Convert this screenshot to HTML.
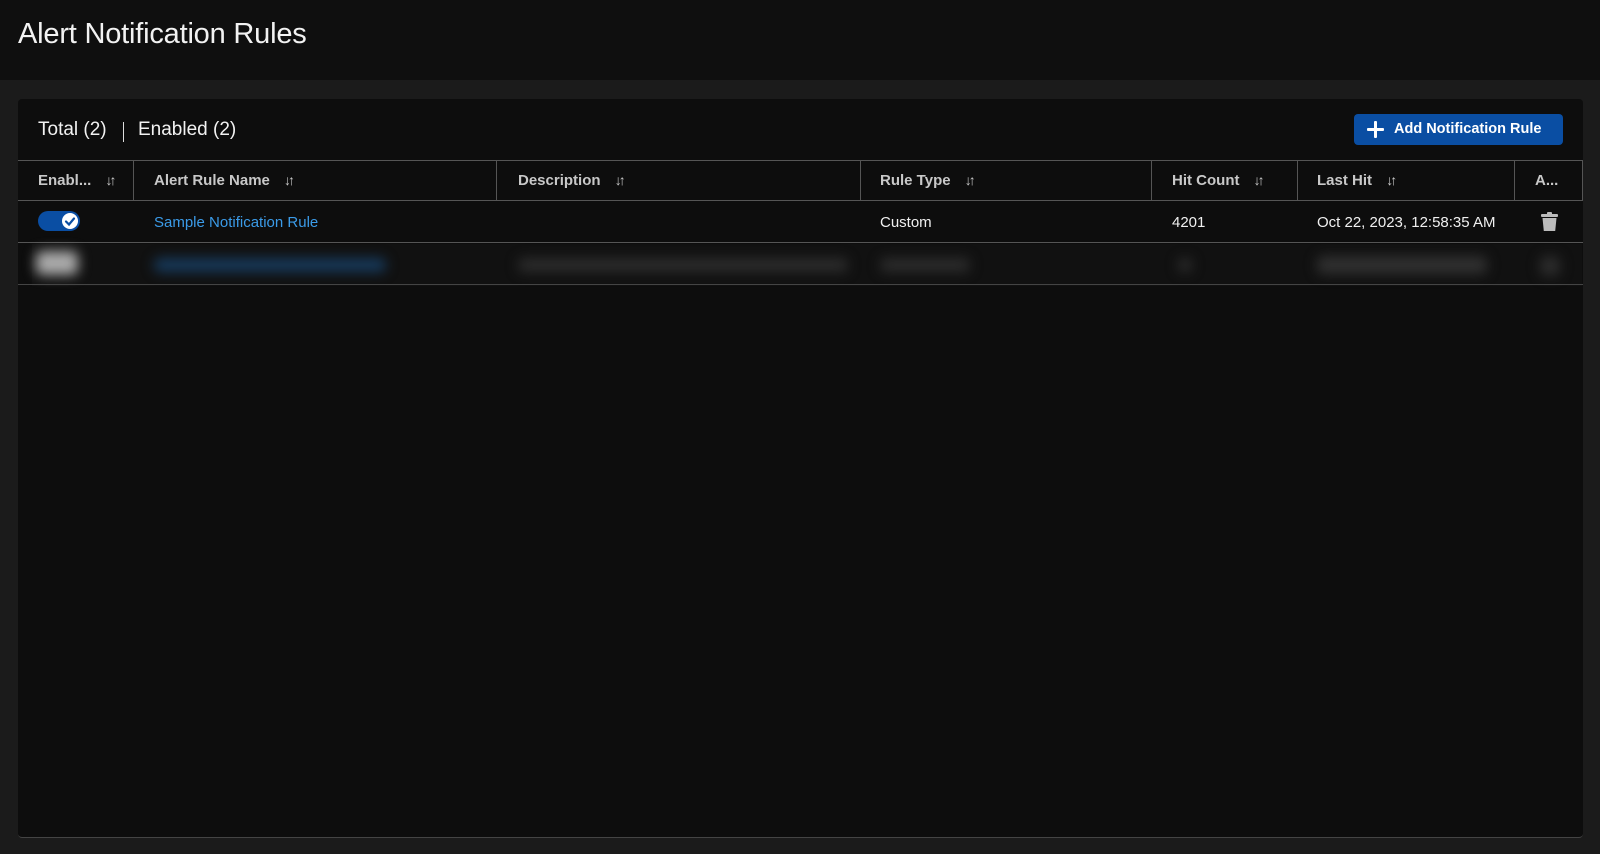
<!DOCTYPE html>
<html><head><meta charset="utf-8"><style>
*{box-sizing:border-box;margin:0;padding:0}
body{width:1600px;height:854px;background:#1b1b1b;font-family:"Liberation Sans",sans-serif;color:#e8e8e8;position:relative;overflow:hidden}
.hdr{position:absolute;left:0;top:0;width:1600px;height:80px;background:#0f0f0f}
.hdr h1{position:absolute;left:18px;top:18px;font-size:29px;font-weight:normal;color:#f2f2f2;letter-spacing:-0.2px}
.panel{position:absolute;left:18px;top:99px;width:1565px;height:739px;background:#0d0d0d;border-radius:4px;border-bottom:1px solid #444}
.sum{position:absolute;left:20px;top:20px;font-size:19px;color:#f2f2f2}
.sep{position:absolute;left:105px;top:23px;width:1px;height:20px;background:#ddd}
.btn{position:absolute;left:1336px;top:15px;width:209px;height:31px;background:#0a4ea3;border-radius:4px;color:#fff;font-weight:bold;font-size:14.5px;line-height:31px;padding-left:40px}
.btn .pl{position:absolute;left:13px;top:7px;width:17px;height:17px}
.btn .pl:before{content:"";position:absolute;left:7px;top:0;width:3px;height:17px;background:#fff;border-radius:1px}
.btn .pl:after{content:"";position:absolute;left:0;top:7px;width:17px;height:3px;background:#fff;border-radius:1px}
.th{position:absolute;top:61px;height:41px;border-top:1px solid #555;border-bottom:1px solid #555;font-size:15px;font-weight:bold;color:#c8c8c8;line-height:41px;white-space:nowrap}
.th span.s{font-size:14px;margin-left:10px;letter-spacing:-3px;font-weight:bold}
.vl{position:absolute;top:61px;height:41px;width:1px;background:#555}
.cell{position:absolute;font-size:15px;color:#f0f0f0;white-space:nowrap}
.row{position:absolute;left:0;width:1565px;height:1px;background:#444}
.blur{position:absolute;filter:blur(6px);border-radius:6px}
</style></head><body>
<div class="hdr"><h1>Alert Notification Rules</h1></div>
<div class="panel">
 <div class="sum">Total (2)</div><div class="sep"></div><div class="sum" style="left:120px">Enabled (2)</div>
 <div class="btn"><div class="pl"></div>Add Notification Rule</div>
 <div class="th" style="left:0;width:1565px"></div>
 <div class="th" style="left:20px;border:none">Enabl... <span class="s">↓↑</span></div>
 <div class="th" style="left:136px;border:none">Alert Rule Name <span class="s">↓↑</span></div>
 <div class="th" style="left:500px;border:none">Description <span class="s">↓↑</span></div>
 <div class="th" style="left:862px;border:none">Rule Type <span class="s">↓↑</span></div>
 <div class="th" style="left:1154px;border:none">Hit Count <span class="s">↓↑</span></div>
 <div class="th" style="left:1299px;border:none">Last Hit <span class="s">↓↑</span></div>
 <div class="th" style="left:1517px;border:none">A...</div>
 <div class="vl" style="left:115px"></div><div class="vl" style="left:478px"></div><div class="vl" style="left:842px"></div><div class="vl" style="left:1133px"></div><div class="vl" style="left:1279px"></div><div class="vl" style="left:1496px"></div><div class="vl" style="left:1564px"></div>
 <div style="position:absolute;left:20px;top:112px;width:42px;height:20px;border-radius:10px;background:#0a4ea3"></div>
 <div style="position:absolute;left:44px;top:114px;width:16px;height:16px;border-radius:8px;background:#fff"></div>
 <svg style="position:absolute;left:44px;top:114px" width="16" height="16"><path d="M4 8.5l3 3 5-6" stroke="#0a4ea3" stroke-width="2.2" fill="none" stroke-linecap="round"/></svg>
 <div class="cell" style="left:136px;top:115px;color:#3b9be8">Sample Notification Rule</div>
 <div class="cell" style="left:862px;top:115px">Custom</div>
 <div class="cell" style="left:1154px;top:115px">4201</div>
 <div class="cell" style="left:1299px;top:115px">Oct 22, 2023, 12:58:35 AM</div>
 <svg style="position:absolute;left:1523px;top:113px" width="17" height="20" viewBox="0 0 17 20"><rect x="0" y="2" width="17" height="3" rx="1" fill="#bbb"/><rect x="6" y="0" width="5" height="3" rx="1" fill="#bbb"/><path d="M1.5 6h14l-1.3 13H2.8z" fill="#bbb"/></svg>
 <div class="row" style="top:143px;background:#555"></div>
 <div style="position:absolute;left:14px;top:145px;width:1550px;height:42px;background:#111"></div>
 <div class="blur" style="left:18px;top:152px;width:42px;height:24px;background:#aaa"></div>
 <div class="blur" style="left:136px;top:159px;width:232px;height:14px;background:#173a5c"></div>
 <div class="blur" style="left:500px;top:159px;width:330px;height:14px;background:#2c2c2c"></div>
 <div class="blur" style="left:862px;top:159px;width:90px;height:14px;background:#2c2c2c"></div>
 <div class="blur" style="left:1160px;top:159px;width:14px;height:14px;background:#2c2c2c"></div>
 <div class="blur" style="left:1299px;top:157px;width:170px;height:18px;background:#303030"></div>
 <div class="blur" style="left:1522px;top:157px;width:20px;height:20px;background:#2c2c2c"></div>
 <div class="row" style="top:185px"></div>
</div>
</body></html>
